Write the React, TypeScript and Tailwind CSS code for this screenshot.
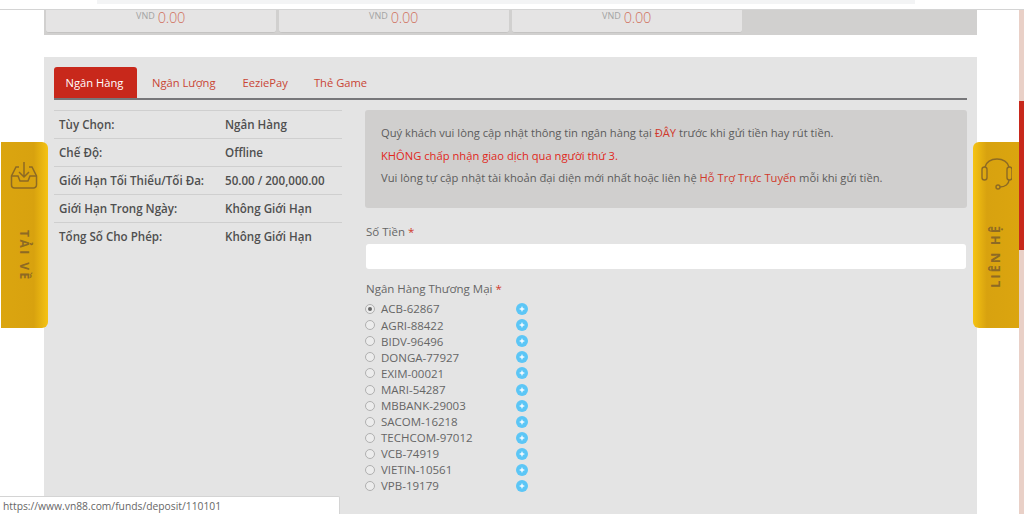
import React from 'react'

const banks = [
    'ACB-62867',
    'AGRI-88422',
    'BIDV-96496',
    'DONGA-77927',
    'EXIM-00021',
    'MARI-54287',
    'MBBANK-29003',
    'SACOM-16218',
    'TECHCOM-97012',
    'VCB-74919',
    'VIETIN-10561',
    'VPB-19179',
]

const limits = [
    ['Tùy Chọn:', 'Ngân Hàng'],
    ['Chế Độ:', 'Offline'],
    ['Giới Hạn Tối Thiểu/Tối Đa:', '50.00 / 200,000.00'],
    ['Giới Hạn Trong Ngày:', 'Không Giới Hạn'],
    ['Tổng Số Cho Phép:', 'Không Giới Hạn'],
]

function BalanceCard() {
    return (
        <div className="w-[230px] h-[23px] bg-[#e5e4e4] rounded-b-[3px] border-b border-[#c4c3c2] flex justify-center items-start pr-[1px]">
            <span className="text-[9px] leading-[12px] text-[#a3a3a3] mr-[3px]">VND</span>
            <span className="text-[14.5px] leading-[16px] font-light text-[#d0705c] tracking-[-0.3px]">0.00</span>
        </div>
    )
}

function InfoDot() {
    return (
        <svg width="12" height="12" viewBox="0 0 12 12" className="block">
            <circle cx="6" cy="6" r="6" fill="#5cc6f6" />
            <path d="M6 3l.9 2.100L9 6l-2.100.9L6 9l-.9-2.100L3 6l2.100-.9z" fill="#eef9ff" />
        </svg>
    )
}

export default function App() {
    return (
        <div
            className="relative w-[1024px] h-[514px] overflow-hidden bg-white text-[#555]"
            style={{ fontFamily: '"Open Sans", "Noto Sans", sans-serif' }}
        >
            {/* top nav remainder */}
            <div className="h-[10px] border-b border-[#d4d4d4] bg-white">
                <div className="ml-[97px] w-[818px] h-[4px] bg-[#f3f4f5]" />
            </div>

            <div className="ml-[44px] w-[933px]">
                {/* balances */}
                <div className="h-[25px] bg-[#d1d0cf] pl-[2px] flex gap-[3px] items-start">
                    <BalanceCard />
                    <BalanceCard />
                    <BalanceCard />
                </div>

                {/* deposit panel */}
                <div className="mt-[22px] h-[480px] bg-[#e4e4e4] px-[10px] pt-[11px]">
                    <div className="flex items-end h-[32px] border-b-2 border-[#77777a] text-[11.2px]">
                        <div className="w-[83px] h-[31px] pt-[1px] pr-[2px] bg-[#c8281b] rounded-t-[3px] text-white flex items-center justify-center">Ngân Hàng</div>
                        <div className="h-[31px] pt-[1px] flex items-center ml-[15px] text-[#c94535]">Ngân Lượng</div>
                        <div className="h-[31px] pt-[1px] flex items-center ml-[27px] text-[#c94535]">EeziePay</div>
                        <div className="h-[31px] pt-[1px] flex items-center ml-[26px] text-[#c94535]">Thẻ Game</div>
                    </div>

                    <div className="flex mt-[10px]">
                        <div className="w-[288px] shrink-0">
                            {limits.map(([label, value]) => (
                                <div key={label} className="h-[28px] border-t border-[#cfcfcf] flex items-center pl-[5px] pt-[1px] text-[11.6px] font-semibold text-[#4f4f4f]">
                                    <div className="w-[166px]">{label}</div>
                                    <div>{value}</div>
                                </div>
                            ))}
                        </div>

                        <div className="ml-[23px] w-[602px]">
                            <div className="h-[98px] bg-[#d0cfce] rounded-[3px] pl-[16px] pt-[12px] text-[11.2px] leading-[22.5px] text-[#5c5c5c]">
                                <div>
                                    Quý khách vui lòng cập nhật thông tin ngân hàng tại <span className="text-[#d0392b]">ĐÂY</span> trước khi gửi tiền hay rút tiền.
                                </div>
                                <div className="text-[#e0281c]">KHÔNG chấp nhận giao dịch qua người thứ 3.</div>
                                <div>
                                    Vui lòng tự cập nhật tài khoản đại diện mới nhất hoặc liên hệ <span className="text-[#d0392b]">Hỗ Trợ Trực Tuyến</span> mỗi khi gửi tiền.
                                </div>
                            </div>

                            <div className="mt-[16px] text-[11.5px] leading-[16px] pl-[1px] text-[#666]">
                                Số Tiền <span className="text-[#d0392b]">*</span>
                            </div>
                            <input className="block mt-[4px] ml-[1px] w-[600px] h-[25px] bg-white rounded-[3px] outline-none" />

                            <div className="mt-[12px] text-[11.5px] leading-[16px] pl-[1px] text-[#666]">
                                Ngân Hàng Thương Mại <span className="text-[#d0392b]">*</span>
                            </div>

                            <div className="mt-[4px]">
                                {banks.map((bank, i) => (
                                    <div key={bank} className="h-[16.1px] flex items-center text-[11.5px] text-[#666]">
                                        <div className="w-[10px] h-[10px] rounded-full border border-[#b0b0b0] bg-[#ececec] flex items-center justify-center">
                                            {i === 0 && <div className="w-[4px] h-[4px] rounded-full bg-[#666]" />}
                                        </div>
                                        <div className="ml-[6px] w-[135px]">{bank}</div>
                                        <InfoDot />
                                    </div>
                                ))}
                            </div>
                        </div>
                    </div>
                </div>
            </div>

            {/* page scrollbar */}
            <div className="absolute top-[10px] right-0 w-[5px] h-[504px] bg-[#e9d0c7]">
                <div className="mt-[91px] h-[149px] bg-[#c8281b]" />
            </div>

            {/* floating tab left */}
            <div className="absolute left-[1px] top-[142px] w-[47px] h-[186px] rounded-r-[6px] bg-gradient-to-r from-[#dba50f] via-[#d8a20f] via-70% to-[#f5c313] flex flex-col items-center pr-[1px] text-[#8d6a24]">
                <svg width="28" height="30" viewBox="0 0 28 30" fill="none" stroke="currentColor" strokeWidth="1.5" className="mt-[19px]">
                    <path d="M14 1v15M9 11l5 5 5-5" />
                    <path d="M9 6H6L1.500 15v9a3 3 0 0 0 3 3h19a3 3 0 0 0 3-3v-9L22 6h-3" />
                    <path d="M1.500 15H8l2 5h8l2-5h6.500" />
                </svg>
                <div className="mt-[39px] text-[12px] font-bold tracking-[2.5px] [writing-mode:vertical-rl]">TẢI VỀ</div>
            </div>

            {/* floating tab right */}
            <div className="absolute left-[973px] top-[142px] w-[46px] h-[186px] rounded-l-[6px] bg-gradient-to-r from-[#f5c313] via-[#d8a20f] via-30% to-[#dba50f] flex flex-col items-center text-[#8d6a24]">
                <svg width="32" height="32" viewBox="0 0 32 32" fill="none" stroke="currentColor" strokeWidth="1.4" className="mt-[16px]">
                    <path d="M5 9C6 4 11 1 17 1s11 3 12 8" />
                    <rect x="2" y="9" width="5" height="13" rx="2.500" />
                    <rect x="27" y="9" width="5" height="13" rx="2.500" />
                    <path d="M29 22c0 4-4 7-9 7" />
                    <circle cx="18" cy="29" r="2" />
                </svg>
                <div className="mt-[34px] text-[13px] font-bold tracking-[2px] [writing-mode:vertical-rl] rotate-180">LIÊN HỆ</div>
            </div>

            {/* browser status url */}
            <div className="absolute left-0 bottom-0 w-[340px] h-[18px] bg-white border-t border-r border-[#d4d4d4] rounded-tr-[2px] pl-[3px] text-[10.3px] leading-[18px] text-[#666]">
                https://www.vn88.com/funds/deposit/110101
            </div>
        </div>
    )
}
